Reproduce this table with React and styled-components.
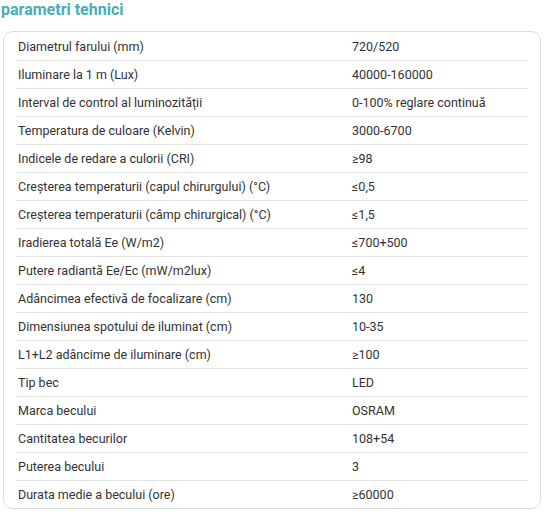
import React from 'react'
import styled, { createGlobalStyle } from 'styled-components'

const rows = [
    [ 'Diametrul farului (mm)', '720/520' ],
    [ 'Iluminare la 1 m (Lux)', '40000-160000' ],
    [ 'Interval de control al luminozității', '0-100% reglare continuă' ],
    [ 'Temperatura de culoare (Kelvin)', '3000-6700' ],
    [ 'Indicele de redare a culorii (CRI)', '≥98' ],
    [ 'Creșterea temperaturii (capul chirurgului) (°C)', '≤0,5' ],
    [ 'Creșterea temperaturii (câmp chirurgical) (°C)', '≤1,5' ],
    [ 'Iradierea totală Ee (W/m2)', '≤700+500' ],
    [ 'Putere radiantă Ee/Ec (mW/m2lux)', '≤4' ],
    [ 'Adâncimea efectivă de focalizare (cm)', '130' ],
    [ 'Dimensiunea spotului de iluminat (cm)', '10-35' ],
    [ 'L1+L2 adâncime de iluminare (cm)', '≥100' ],
    [ 'Tip bec', 'LED' ],
    [ 'Marca becului', 'OSRAM' ],
    [ 'Cantitatea becurilor', '108+54' ],
    [ 'Puterea becului', '3' ],
    [ 'Durata medie a becului (ore)', '≥60000' ],
]

export default function App() {
    return (
        <Page>
            <GlobalStyle />
            <Title>parametri tehnici</Title>
            <SpecBox>
                {rows.map( ( [ label, value ], i ) => (
                    <SpecRow key={i} $first={i === 0}>
                        <SpecLabel>{label}</SpecLabel>
                        <SpecValue>{value}</SpecValue>
                    </SpecRow>
                ) )}
            </SpecBox>
        </Page>
    )
};

const GlobalStyle = createGlobalStyle`
body{
    margin:0;
    background:#fff;
    font-family: Roboto, 'Liberation Sans', sans-serif;
}
`;

const Page = styled.div`
width:547px;
padding:0 0 0 3px;
box-sizing:border-box;
`;

const Title = styled.h3`
margin:0 0 0 -2px;
font-size:16px;
line-height:20px;
font-weight:700;
color:#4aaeb3;
`;

const SpecBox = styled.div`
margin-top:11px;
width:538px;
box-sizing:border-box;
border:1px solid #dcdcdc;
border-radius:10px;
padding:0 12px;
`;

const SpecRow = styled.div`
display:grid;
grid-template-columns:334px 1fr;
height:28px;
align-items:center;
border-top:${p => p.$first ? 'none' : '1px solid #e2e2e2'};
box-sizing:border-box;
font-size:12.5px;
color:#333;
`;

const SpecLabel = styled.div`
padding-left:2px;
`;

const SpecValue = styled.div`
padding-left:2px;
`;
